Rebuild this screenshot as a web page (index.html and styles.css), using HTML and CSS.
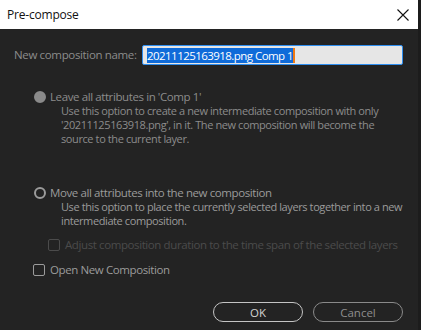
FILE: index.html
```html
<!DOCTYPE html>
<html lang="en">
<head>
  <meta charset="UTF-8" />
  <title>Pre-compose</title>
  <link rel="stylesheet" href="styles.css">
</head>
<body>
<div class="window">
  <header class="titlebar">
    <span class="title">Pre-compose</span>
    <svg class="close" width="12" height="12" viewBox="0 0 12 12">
      <path d="M0.5 0.5 L11.5 11.5 M11.5 0.5 L0.5 11.5" stroke="#111" stroke-width="1.1" fill="none"/>
    </svg>
  </header>

  <main class="dialog">
    <div class="name-row">
      <label class="name-label">New composition name:</label>
      <div class="name-input"><span class="selection">20211125163918.png Comp 1</span><span class="caret"></span></div>
    </div>

    <div class="option disabled">
      <div class="option-head">
        <span class="radio filled"></span>
        <span>Leave all attributes in 'Comp 1'</span>
      </div>
      <p class="option-desc">Use this option to create a new intermediate composition with only '20211125163918.png', in it. The new composition will become the source to the current layer.</p>
    </div>

    <div class="option second">
      <div class="option-head">
        <span class="radio"></span>
        <span>Move all attributes into the new composition</span>
      </div>
      <p class="option-desc">Use this option to place the currently selected layers together into a new intermediate composition.</p>
    </div>

    <div class="check sub disabled">
      <span class="box"></span>
      <span>Adjust composition duration to the time span of the selected layers</span>
    </div>

    <div class="check">
      <span class="box"></span>
      <span>Open New Composition</span>
    </div>

    <div class="buttons">
      <button class="button primary">OK</button>
      <button class="button">Cancel</button>
    </div>
  </main>
</div>
</body>
</html>
```

FILE: styles.css
```css
* {
  margin: 0;
  padding: 0;
  box-sizing: border-box;
}

html, body {
  height: 100%;
  background-color: #1c1c1c;
  font-family: 'Open Sans', 'Noto Sans', sans-serif;
  overflow: hidden;
}

.window {
  width: 418px;
  height: 330px;
  display: flex;
  flex-direction: column;
  background-color: #232323;
}

/* Titelleiste */
.titlebar {
  height: 29px;
  flex: 0 0 29px;
  background-color: #ffffff;
  display: flex;
  align-items: center;
  justify-content: space-between;
  padding: 0 9px 0 7px;
}

.title {
  font-size: 12px;
  color: #111;
  letter-spacing: -0.2px;
}

.close {
  display: block;
}

.dialog {
  flex: 1;
  display: flex;
  flex-direction: column;
  font-size: 11px;
  line-height: 14px;
  color: #9b9b9b;
  letter-spacing: -0.4px;
}

/* Name-Zeile */
.name-row {
  display: flex;
  align-items: center;
  padding: 16px 15px 0 14px;
  height: 36px;
}

.name-label {
  width: 128px;
  color: #8c8c8c;
  font-size: 11.5px;
  letter-spacing: -0.35px;
}

.name-input {
  flex: 1;
  height: 20px;
  background-color: #e6e6e6;
  border: 1px solid #2e8ef0;
  border-radius: 2px;
  display: flex;
  align-items: center;
  padding-left: 4px;
}

.selection {
  background-color: #0f6bd9;
  color: #fff;
  font-size: 11.5px;
  line-height: 15px;
  letter-spacing: -0.55px;
}

.caret {
  width: 2px;
  height: 15px;
  background-color: #f07a14;
}

/* Optionen */
.option {
  padding-left: 34px;
  margin-top: 25px;
}

.option.second {
  margin-top: 40px;
}

.option-head {
  display: flex;
  align-items: center;
  gap: 4px;
  font-size: 11.5px;
}

.option-desc {
  padding-left: 27px;
  padding-right: 15px;
}

.disabled {
  color: #8c8c8c;
}

.radio {
  width: 12px;
  height: 12px;
  border-radius: 50%;
  border: 2px solid #9b9b9b;
}

.radio.filled {
  background-color: #8a8a8a;
  border-color: #8a8a8a;
}

.check {
  display: flex;
  align-items: center;
  gap: 5px;
  padding-left: 33px;
  margin-top: 11px;
  font-size: 11.5px;
}

.check.sub {
  padding-left: 48px;
  margin-top: 10px;
  color: #4b4b4b;
}

.box {
  width: 12px;
  height: 12px;
  border: 1.5px solid #9b9b9b;
  border-radius: 2px;
}

.check.sub .box {
  border-color: #4b4b4b;
}

/* Schaltflächen */
.buttons {
  display: flex;
  justify-content: flex-end;
  gap: 10px;
  padding-right: 15px;
  margin-top: 25px;
}

.button {
  width: 90px;
  height: 20px;
  border-radius: 10px;
  background: transparent;
  border: 1px solid #8a8a8a;
  color: #8e8e8e;
  font-family: 'Open Sans', 'Noto Sans', sans-serif;
  font-size: 11.5px;
}

.button.primary {
  border-color: #c4c4c4;
  color: #d2d2d2;
}
```
